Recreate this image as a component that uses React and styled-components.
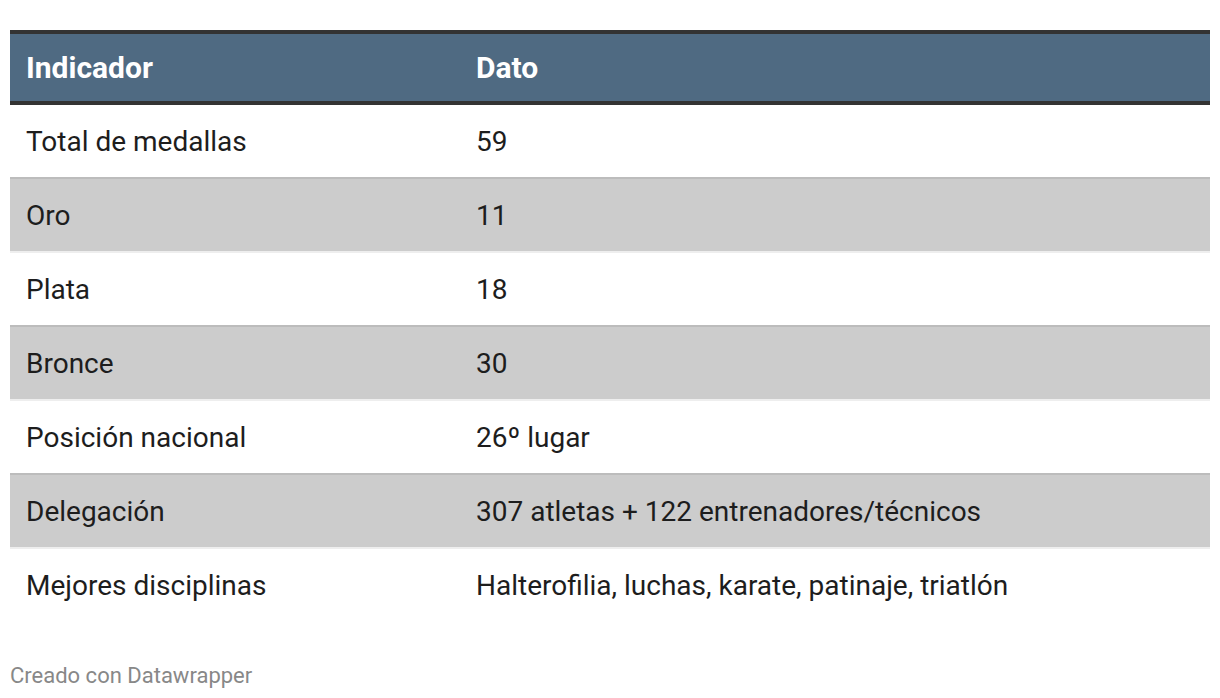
import styled, { createGlobalStyle } from 'styled-components';

const rows = [
  ['Total de medallas', '59'],
  ['Oro', '11'],
  ['Plata', '18'],
  ['Bronce', '30'],
  ['Posición nacional', '26º lugar'],
  ['Delegación', '307 atletas + 122 entrenadores/técnicos'],
  ['Mejores disciplinas', 'Halterofilia, luchas, karate, patinaje, triatlón'],
];

const GlobalStyle = createGlobalStyle`
  body {
    margin: 0;
    background: #fff;
    font-family: Roboto, 'Liberation Sans', sans-serif;
  }
`;

const Page = styled.div`
  padding: 30px 10px 0;
`;

const Table = styled.table`
  width: 1200px;
  border-collapse: collapse;
  table-layout: fixed;
  border-top: 4px solid #333;
`;

const HeadRow = styled.tr`
  background: #4f6a82;
  border-bottom: 4px solid #333;
`;

const HeadCell = styled.th`
  height: 67px;
  padding: 0 17px 0 16px;
  text-align: left;
  color: #fff;
  font-size: 30px;
  font-weight: 700;
  width: ${(p) => p.$w || 'auto'};
`;

const Row = styled.tr`
  background: ${(p) => (p.$striped ? '#cccccc' : '#fff')};
  border-top: 2px solid ${(p) => (p.$striped ? '#bcbcbc' : '#eeeeee')};

  &:first-child {
    border-top: none;
  }
`;

const Cell = styled.td`
  height: 72px;
  padding: 0 17px 0 16px;
  color: #1d1d1d;
  font-size: 28px;
  vertical-align: middle;
`;

const Footer = styled.div`
  margin-top: 42px;
  font-size: 22px;
  color: #888;
`;

export default function App() {
  return (
    <>
      <GlobalStyle />
      <Page>
        <Table>
          <thead>
            <HeadRow>
              <HeadCell $w="417px">Indicador</HeadCell>
              <HeadCell>Dato</HeadCell>
            </HeadRow>
          </thead>
          <tbody>
            {rows.map(([label, value], i) => (
              <Row key={label} $striped={i % 2 === 1}>
                <Cell>{label}</Cell>
                <Cell>{value}</Cell>
              </Row>
            ))}
          </tbody>
        </Table>
        <Footer>Creado con Datawrapper</Footer>
      </Page>
    </>
  );
}
